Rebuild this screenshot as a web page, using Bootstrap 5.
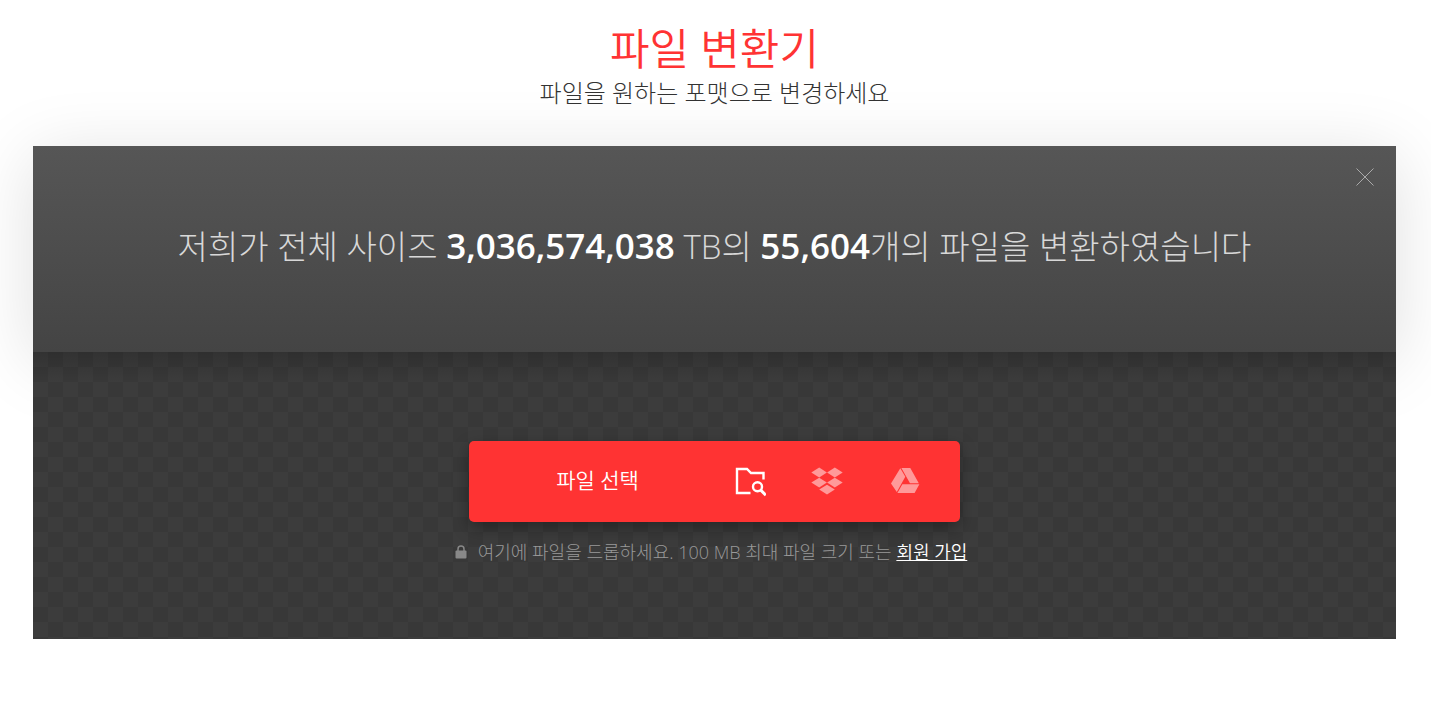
<!DOCTYPE html>
<html lang="ko">
<head>
<meta charset="utf-8">
<meta name="viewport" content="width=device-width, initial-scale=1">
<title>파일 변환기</title>
<link href="https://cdn.jsdelivr.net/npm/bootstrap@5.3.0/dist/css/bootstrap.min.css" rel="stylesheet">
<style>
  body { font-family: "Open Sans", "Noto Sans CJK KR", sans-serif; font-weight: 300; color: #333; background: #fff; }
  .page { padding: 24px 35px 64px 33px; }
  .page-title { font-size: 43px; line-height: 50px; font-weight: 350; color: #f33; }
  .page-subtitle { font-size: 24px; line-height: 38px; margin-bottom: 34px; }
  .stats { min-height: 206px; padding: 0 24px 6px; background: linear-gradient(#565656, #444); box-shadow: 0 10px 70px rgba(0,0,0,.13); }
  .stats-text { font-size: 33px; line-height: 48px; color: #d8d8d8; }
  .stats-text strong { font-size: 35px; font-weight: 600; color: #fff; }
  .close-btn { top: 21px; right: 21px; line-height: 0; }
  .drop-zone { padding: 89px 24px 73px; background: linear-gradient(rgba(0,0,0,.17), transparent 30px), repeating-conic-gradient(#383838 0 25%, #3c3c3c 0 50%) 0 0 / 30px 30px; }
  .picker { width: 491px; max-width: 100%; height: 81px; background: #f33; border-radius: 5px; box-shadow: 0 6px 16px rgba(0,0,0,.35); }
  .picker button { font-size: 21px; font-weight: 350; line-height: 30px; color: #fff; }
  .icon-group { width: 250px; }
  .icon-group button { width: 78px; line-height: 0; }
  .hint { font-size: 18px; line-height: 28px; color: #999; gap: 10px; }
  .hint a { color: #fff; font-weight: 350; }
</style>
</head>
<body>
<main class="page">
  <header class="text-center">
    <h1 class="page-title mb-0">파일 변환기</h1>
    <p class="page-subtitle">파일을 원하는 포맷으로 변경하세요</p>
  </header>
  <section class="stats position-relative z-1 d-flex align-items-center justify-content-center text-center">
    <p class="stats-text mb-0">저희가 전체 사이즈 <strong>3,036,574,038</strong> TB의 <strong>55,604</strong>개의 파일을 변환하였습니다</p>
    <button type="button" class="close-btn position-absolute border-0 bg-transparent p-0" aria-label="닫기">
      <svg width="20" height="20" viewBox="0 0 20 20" fill="none" stroke="#aaa"><path d="M1.500 1.500l17 17M18.500 1.500l-17 17"/></svg>
    </button>
  </section>
  <section class="drop-zone position-relative z-2 d-flex flex-column align-items-center">
    <div class="picker d-flex">
      <button type="button" class="flex-grow-1 border-0 bg-transparent pt-0 pb-1 pe-0 ps-3">파일 선택</button>
      <div class="icon-group d-flex">
        <button type="button" class="border-0 bg-transparent p-0" aria-label="내 컴퓨터">
          <svg width="34" height="32" viewBox="-3 1.500 34 32" fill="none" stroke="#fff"><path d="M28.500 15V8.500H16l-4-4H2v24h13.500" stroke-width="2.400"/><circle cx="22.500" cy="22.300" r="4.500" stroke-width="2.400"/><path d="M25.800 25.600l5 5" stroke-width="3"/></svg>
        </button>
        <button type="button" class="border-0 bg-transparent p-0" aria-label="Dropbox">
          <svg width="32" height="32" viewBox="0 3 32 32" fill="#ff9999"><path d="M8.200 4.500l7.700 4.900-7.700 5-7.900-5zM23.800 4.500l7.900 4.900-7.900 5-7.700-5zM8.200 14.800l7.700 4.800-7.700 4.900-7.900-4.900zM23.800 14.800l7.900 4.800-7.900 4.900-7.700-4.900zM16 21.700l7.800 4.700L16 31.500l-7.800-5.100z"/></svg>
        </button>
        <button type="button" class="border-0 bg-transparent p-0" aria-label="Google Drive">
          <svg width="32" height="32" viewBox="0 3 32 32" fill="#ff9999"><path d="M11.300 5.200l5 8.500-8.500 15.200-5.800-8.500zM12.400 4.900h8.900l8.500 15.300H21zM13.400 21.300h17l-4.800 8.600H8.400z"/></svg>
        </button>
      </div>
    </div>
    <p class="hint mb-0 mt-3 pe-2 d-flex align-items-center">
      <svg width="14" height="14" viewBox="0 0 14 14"><path d="M4 6V4a3 3 0 0 1 6 0v2" fill="none" stroke="#888" stroke-width="1.500"/><rect x="1.500" y="5.500" width="11" height="8" rx="1" fill="#888"/></svg>
      <span>여기에 파일을 드롭하세요. 100 MB 최대 파일 크기 또는 <a href="#signup">회원 가입</a></span>
    </p>
  </section>
</main>
<script src="https://cdn.jsdelivr.net/npm/bootstrap@5.3.0/dist/js/bootstrap.bundle.min.js"></script>
</body>
</html>
